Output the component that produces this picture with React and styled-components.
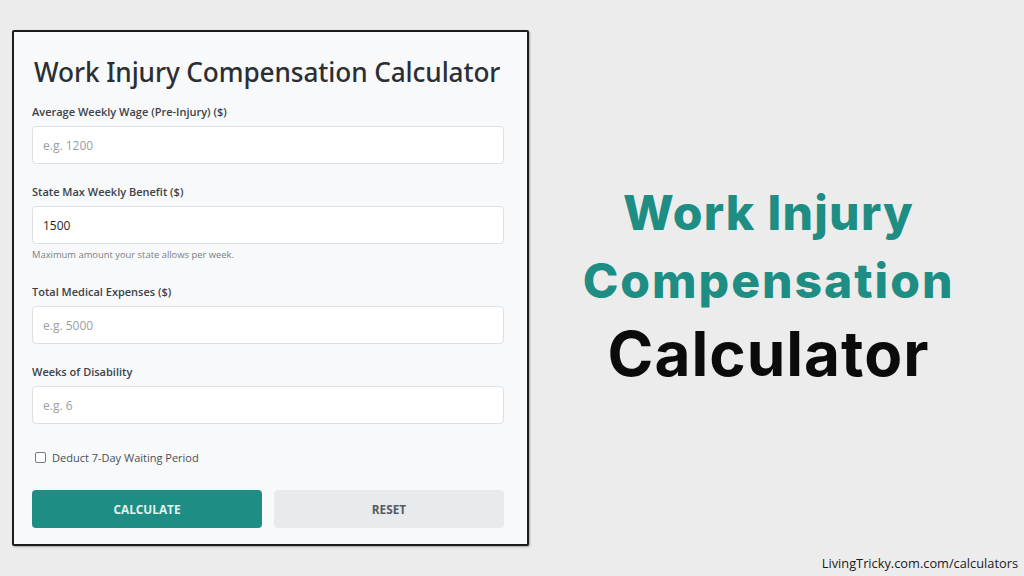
import React from "react";
import styled, { createGlobalStyle } from "styled-components";

const Global = createGlobalStyle`
  html, body { margin: 0; padding: 0; background: #ececec; }
  * { box-sizing: border-box; }
`;

const Page = styled.div`
  width: 1024px;
  height: 576px;
  display: flex;
  flex-direction: column;
  padding: 30px 0 0 12px;
  overflow: hidden;
`;

const Main = styled.div`
  display: flex;
  align-items: stretch;
`;

const Card = styled.div`
  width: 517px;
  height: 516px;
  border: 2px solid #1b1b1b;
  border-radius: 2px;
  background: #f8f9fa;
  padding: 0 23px 0 18px;
  display: flex;
  flex-direction: column;
  font-family: "Open Sans", "Noto Sans", sans-serif;
  box-shadow: 1px 1px 2px rgba(0,0,0,0.3);
`;

const Title = styled.h1`
  margin: 23px 0 0 2px;
  font-family: "Noto Sans", sans-serif;
  font-weight: 500;
  font-size: 26.2px;
  letter-spacing: -0.1px;
  color: #2b2f33;
  line-height: 35px;
`;

const Field = styled.div`
  display: flex;
  flex-direction: column;
  margin-top: ${(p) => p.$mt}px;
`;

const Label = styled.label`
  font-size: 11px;
  font-weight: 600;
  color: #3d4247;
  line-height: 14px;
  margin-bottom: 7px;
`;

const Input = styled.input`
  height: 38px;
  width: 100%;
  border: 1px solid #dcdfe3;
  border-radius: 4px;
  background: #fff;
  padding: 0 10px;
  font-family: "Open Sans", sans-serif;
  font-size: 12px;
  color: #212529;
  font-weight: 500;
  outline: none;
  &::placeholder { color: #9a9ea3; font-weight: 400; }
`;

const Hint = styled.div`
  font-size: 9.4px;
  color: #7a7f85;
  margin-top: 5px;
  line-height: 12px;
`;

const CheckRow = styled.label`
  display: flex;
  align-items: center;
  gap: 6px;
  margin-top: 26px;
  margin-left: 3px;
  font-size: 11px;
  color: #4a4f55;
`;

const Box = styled.span`
  width: 11px;
  height: 11px;
  border: 1px solid #767b80;
  border-radius: 2px;
  background: #fff;
`;

const Buttons = styled.div`
  display: grid;
  grid-template-columns: 1fr 1fr;
  gap: 12px;
  margin-top: 25px;
`;

const Button = styled.button`
  height: 38px;
  border: none;
  border-radius: 4px;
  font-family: "Open Sans", sans-serif;
  font-weight: 700;
  font-size: 11.8px;
  background: ${(p) => (p.$primary ? "#1e8d84" : "#e8ebed")};
  color: ${(p) => (p.$primary ? "#e3f3f1" : "#555b61")};
`;

const Side = styled.div`
  flex: 1;
  display: flex;
  flex-direction: column;
  align-items: center;
  justify-content: center;
  padding-right: 16px;
  padding-bottom: 4px;
  font-family: "Inter", sans-serif;
`;

const SideLine = styled.div`
  font-size: ${(p) => p.$size}px;
  font-weight: ${(p) => p.$weight};
  color: ${(p) => p.$color};
  line-height: ${(p) => p.$lh}px;
  letter-spacing: ${(p) => p.$ls}px;
  white-space: nowrap;
`;

const Footer = styled.div`
  display: flex;
  justify-content: flex-end;
  padding-right: 6px;
  margin-top: 8px;
  font-family: "Open Sans", sans-serif;
  font-size: 12.8px;
  color: #1b1b1b;
`;

const fields = [
  { label: "Average Weekly Wage (Pre-Injury) ($)", placeholder: "e.g. 1200", mt: 15 },
  { label: "State Max Weekly Benefit ($)", value: "1500", mt: 21, hint: "Maximum amount your state allows per week." },
  { label: "Total Medical Expenses ($)", placeholder: "e.g. 5000", mt: 24 },
  { label: "Weeks of Disability", placeholder: "e.g. 6", mt: 21 },
];

export default function App() {
  return (
    <>
      <Global />
      <Page>
        <Main>
          <Card>
            <Title>Work Injury Compensation Calculator</Title>
            {fields.map((f) => (
              <Field key={f.label} $mt={f.mt}>
                <Label>{f.label}</Label>
                <Input placeholder={f.placeholder} defaultValue={f.value} readOnly />
                {f.hint && <Hint>{f.hint}</Hint>}
              </Field>
            ))}
            <CheckRow>
              <Box />
              Deduct 7-Day Waiting Period
            </CheckRow>
            <Buttons>
              <Button $primary>CALCULATE</Button>
              <Button>RESET</Button>
            </Buttons>
          </Card>
          <Side>
            <SideLine $size={48} $weight={800} $color="#1e8d84" $lh={68} $ls={1.3}>Work Injury</SideLine>
            <SideLine $size={48} $weight={800} $color="#1e8d84" $lh={68} $ls={2}>Compensation</SideLine>
            <SideLine $size={62} $weight={700} $color="#0b0b0b" $lh={78} $ls={1}>Calculator</SideLine>
          </Side>
        </Main>
        <Footer>LivingTricky.com.com/calculators</Footer>
      </Page>
    </>
  );
}
